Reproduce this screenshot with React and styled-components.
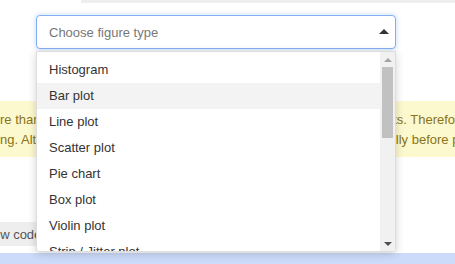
import React from "react";
import styled, { createGlobalStyle } from "styled-components";

const GlobalStyle = createGlobalStyle`
  html, body {
    margin: 0;
    padding: 0;
    background: #fff;
    overflow: hidden;
  }
  body {
    font-family: "Liberation Sans", Arial, sans-serif;
    font-size: 13px;
  }
`;

const Page = styled.div`
  width: 455px;
  height: 264px;
  overflow: hidden;
`;

const TopStrip = styled.div`
  height: 3px;
  margin-left: 81px;
  background: #eeeeee;
`;

const SelectField = styled.div`
  position: relative;
  width: 360px;
  margin: 12px 0 0 36px;
  z-index: 5;
`;

const SelectBox = styled.div`
  box-sizing: border-box;
  height: 34px;
  display: flex;
  align-items: center;
  justify-content: space-between;
  padding: 0 6px 0 12px;
  border: 1px solid #86b0f5;
  border-radius: 4px;
  background: #fff;
  box-shadow: 0 0 4px 1px rgba(80, 140, 240, 0.25);
`;

const Placeholder = styled.span`
  color: #777;
  font-size: 13px;
`;

const Caret = styled.span`
  width: 0;
  height: 0;
  margin-top: -1px;
  border-left: 5px solid transparent;
  border-right: 5px solid transparent;
  border-bottom: 5px solid #333;
`;

const Menu = styled.div`
  position: absolute;
  top: 36px;
  left: 0;
  width: 360px;
  height: 201px;
  box-sizing: border-box;
  display: flex;
  border: 1px solid #ddd;
  border-radius: 0 0 3px 3px;
  background: #fff;
  box-shadow: 0 2px 8px rgba(0, 0, 0, 0.18);
  overflow: hidden;
`;

const OptionList = styled.ul`
  flex: 1;
  list-style: none;
  margin: 0;
  padding: 5px 0 0;
  overflow: hidden;
`;

const Option = styled.li`
  height: 26px;
  line-height: 26px;
  padding-left: 12px;
  color: #333;
  font-size: 13px;
  white-space: nowrap;
  background: ${(p) => (p.$active ? "#f3f3f3" : "transparent")};
`;

const Scrollbar = styled.div`
  width: 15px;
  display: flex;
  flex-direction: column;
  align-items: center;
  background: #f1f1f1;
`;

const ScrollArrow = styled.div`
  height: 15px;
  width: 15px;
  display: flex;
  align-items: center;
  justify-content: center;
  margin-top: ${(p) => (p.$down ? "auto" : "0")};

  &::after {
    content: "";
    width: 0;
    height: 0;
    border-left: 4px solid transparent;
    border-right: 4px solid transparent;
    ${(p) =>
      p.$down
        ? `border-top: 4px solid ${p.$color};`
        : `border-bottom: 4px solid ${p.$color};`}
  }
`;

const Thumb = styled.div`
  width: 11px;
  height: 71px;
  background: #c1c1c1;
`;

const Alert = styled.div`
  margin-top: 52px;
  padding: 9px 0 7px;
  background: #fcf9cf;
  color: #8a7318;
  font-size: 13px;
  line-height: 20px;
  white-space: nowrap;
  overflow: hidden;
`;

const AlertText = styled.p`
  margin: 0 0 0 -78px;
`;

const ButtonRow = styled.div`
  margin-top: 65px;
  display: flex;
`;

const CodeButton = styled.button`
  height: 24px;
  margin-left: -31px;
  padding: 0 8px;
  border: none;
  border-radius: 3px;
  background: #eeeeee;
  color: #555;
  font-family: inherit;
  font-size: 13px;
`;

const BottomBar = styled.div`
  margin-top: 7px;
  height: 20px;
  background: #cddbfb;
`;

const figureTypes = [
  "Histogram",
  "Bar plot",
  "Line plot",
  "Scatter plot",
  "Pie chart",
  "Box plot",
  "Violin plot",
  "Strip / Jitter plot",
  "Heatmap",
];

export default function App() {
  return (
    <Page>
      <GlobalStyle />
      <TopStrip />
      <SelectField>
        <SelectBox>
          <Placeholder>Choose figure type</Placeholder>
          <Caret />
        </SelectBox>
        <Menu>
          <OptionList>
            {figureTypes.map((t) => (
              <Option key={t} $active={t === "Bar plot"}>
                {t}
              </Option>
            ))}
          </OptionList>
          <Scrollbar>
            <ScrollArrow $color="#a3a3a3" />
            <Thumb />
            <ScrollArrow $down $color="#505050" />
          </Scrollbar>
        </Menu>
      </SelectField>
      <Alert>
        <AlertText>
          There are more than 10,000 data points. Plotting may get too slow with big datasets. Therefore, you may want to sample
          <br />
          it before plotting. Alternatively, you can also filter or subsample the data set manually before plotting it yourself.
        </AlertText>
      </Alert>
      <ButtonRow>
        <CodeButton>Show code</CodeButton>
      </ButtonRow>
      <BottomBar />
    </Page>
  );
}
